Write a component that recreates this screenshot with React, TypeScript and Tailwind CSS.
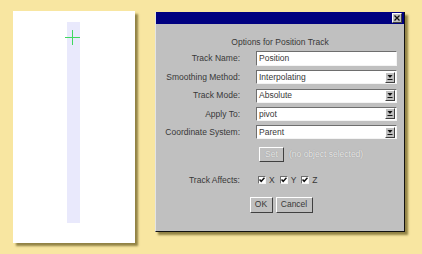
import React from "react";

const raised = "border border-t-white border-l-white border-b-[#404040] border-r-[#404040]";
const sunken = "border border-t-[#6e6e6e] border-l-[#6e6e6e] border-b-[#f4f4f4] border-r-[#f4f4f4]";

const Arrow = () => (
    <div className={`mr-px flex h-[11px] w-[10px] items-center justify-center bg-[#c0c0c0] ${raised}`}>
        <svg width="6" height="5" viewBox="0 0 6 5">
            <path d="M0.5 0H5.5L3 3Z" fill="#111" />
            <rect x="0.5" y="4" width="5" height="1" fill="#111" />
        </svg>
    </div>
);

const Select = ({ value }: { value: string }) => (
    <div className={`flex h-[14px] w-[141px] items-center bg-white ${sunken}`}>
        <span className="flex-1 pl-[2px] leading-none">{value}</span>
        <Arrow />
    </div>
);

const Row = ({ label, children }: { label: string; children: React.ReactNode }) => (
    <div className="flex items-center">
        <div className="w-[84px] text-right leading-none">{label}</div>
        <div className="ml-[16px]">{children}</div>
    </div>
);

const Check = ({ label }: { label: string }) => (
    <div className="flex items-center gap-[3px]">
        <div className={`flex h-[8px] w-[8px] items-center justify-center bg-white ${sunken}`}>
            <svg width="6" height="6" viewBox="0 0 6 6">
                <path d="M0.5 2.5L2.2 4.3L5.5 0.8" fill="none" stroke="#111" strokeWidth="1.5" />
            </svg>
        </div>
        <span className="leading-none">{label}</span>
    </div>
);

export default function App() {
    return (
        <div className="flex h-[254px] w-[422px] items-start bg-[#f8e6a1] font-['Liberation_Sans',Arial,sans-serif] text-[8.5px] text-[#383838]">
            {/* viewport */}
            <div className="ml-[13px] mt-[11px] flex h-[232px] w-[122px] bg-white shadow-[3px_3px_2px_rgba(90,78,20,0.65)]">
                <div className="relative ml-[54px] mt-[11px] h-[201px] w-[13px] bg-[#e9e9fc]">
                    <div className="absolute left-[-2px] top-[15px] h-px w-[15px] bg-[#3fd85e]" />
                    <div className="absolute left-[5px] top-[8px] h-[15px] w-px bg-[#3fd85e]" />
                </div>
            </div>

            {/* dialog */}
            <div className="ml-[20px] mt-[12px] flex h-[220px] w-[250px] flex-col border-l border-l-[#e4e4e4] border-r border-r-[#111] border-b border-b-[#111] bg-[#c0c0c0] shadow-[3px_3px_2px_rgba(90,78,20,0.65)]">
                <div className="flex h-[12px] items-center justify-end bg-[#000080] pr-[2px]">
                    <div className={`flex h-[10px] w-[10px] items-center justify-center bg-[#c0c0c0] ${raised}`}>
                        <svg width="6" height="6" viewBox="0 0 6 6">
                            <path d="M0.5 0.5L5.5 5.5M5.5 0.5L0.5 5.5" stroke="#111" strokeWidth="1.3" />
                        </svg>
                    </div>
                </div>

                <div className="mt-[13px] h-[10px] text-center leading-[10px]">Options for Position Track</div>

                <div className="mt-[4px] flex flex-col gap-y-[4.25px]">
                    <Row label="Track Name:">
                        <div className={`flex h-[15px] w-[141px] items-center bg-white pl-[2px] ${sunken}`}>
                            <span className="leading-none">Position</span>
                        </div>
                    </Row>
                    <Row label="Smoothing Method:">
                        <Select value="Interpolating" />
                    </Row>
                    <Row label="Track Mode:">
                        <Select value="Absolute" />
                    </Row>
                    <Row label="Apply To:">
                        <Select value="pivot" />
                    </Row>
                    <Row label="Coordinate System:">
                        <Select value="Parent" />
                    </Row>
                </div>

                <div className="mt-[8px] flex items-center pl-[103px]">
                    <div className={`flex h-[15px] w-[25px] items-center justify-center text-[#e8e8e8] [text-shadow:0_0_1px_rgba(0,0,0,0.3)] ${raised}`}>
                        Set
                    </div>
                    <span className="ml-[5px] text-[#e8e8e8] [text-shadow:0_0_1px_rgba(0,0,0,0.3)]">(no object selected)</span>
                </div>

                <div className="mt-[14px]">
                    <Row label="Track Affects:">
                        <div className="ml-[2px] flex items-center gap-[5px]">
                            <Check label="X" />
                            <Check label="Y" />
                            <Check label="Z" />
                        </div>
                    </Row>
                </div>

                <div className="mt-[12px] flex justify-center gap-[3px] pl-[2px]">
                    <div className={`flex h-[16px] w-[23px] items-center justify-center ${raised}`}>OK</div>
                    <div className={`flex h-[16px] w-[37px] items-center justify-center ${raised}`}>Cancel</div>
                </div>
            </div>
        </div>
    );
}
